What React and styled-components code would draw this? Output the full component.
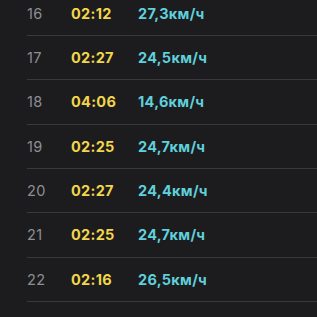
import React from "react";
import styled, { createGlobalStyle } from "styled-components";

const Global = createGlobalStyle`
  html, body { margin: 0; padding: 0; background: #1c1c1e; }
  body { width: 317px; height: 317px; overflow: hidden; font-family: Inter, "Noto Sans", sans-serif; }
`;

const List = styled.div`
  margin-top: -8.33px;
  display: flex;
  flex-direction: column;
`;

const Row = styled.div`
  box-sizing: border-box;
  height: 44.33px;
  margin-left: 27px;
  padding-top: 1px;
  border-bottom: 1px solid #38383a;
  display: grid;
  grid-template-columns: 44px 67px 1fr;
  align-items: center;
  font-size: 14.5px;
  letter-spacing: 0.3px;
  line-height: 1;
`;

const Lap = styled.span`
  color: #8e8e93;
  font-weight: 400;
`;

const Time = styled.span`
  color: #f2d64b;
  font-weight: 700;
`;

const Speed = styled.span`
  color: #5fd0dc;
  font-weight: 700;
`;

const rows = [
  ["16", "02:12", "27,3"],
  ["17", "02:27", "24,5"],
  ["18", "04:06", "14,6"],
  ["19", "02:25", "24,7"],
  ["20", "02:27", "24,4"],
  ["21", "02:25", "24,7"],
  ["22", "02:16", "26,5"],
];

export default function App() {
  return (
    <>
      <Global />
      <List>
        {rows.map(([n, t, s]) => (
          <Row key={n}>
            <Lap>{n}</Lap>
            <Time>{t}</Time>
            <Speed>{s}км/ч</Speed>
          </Row>
        ))}
      </List>
    </>
  );
}
